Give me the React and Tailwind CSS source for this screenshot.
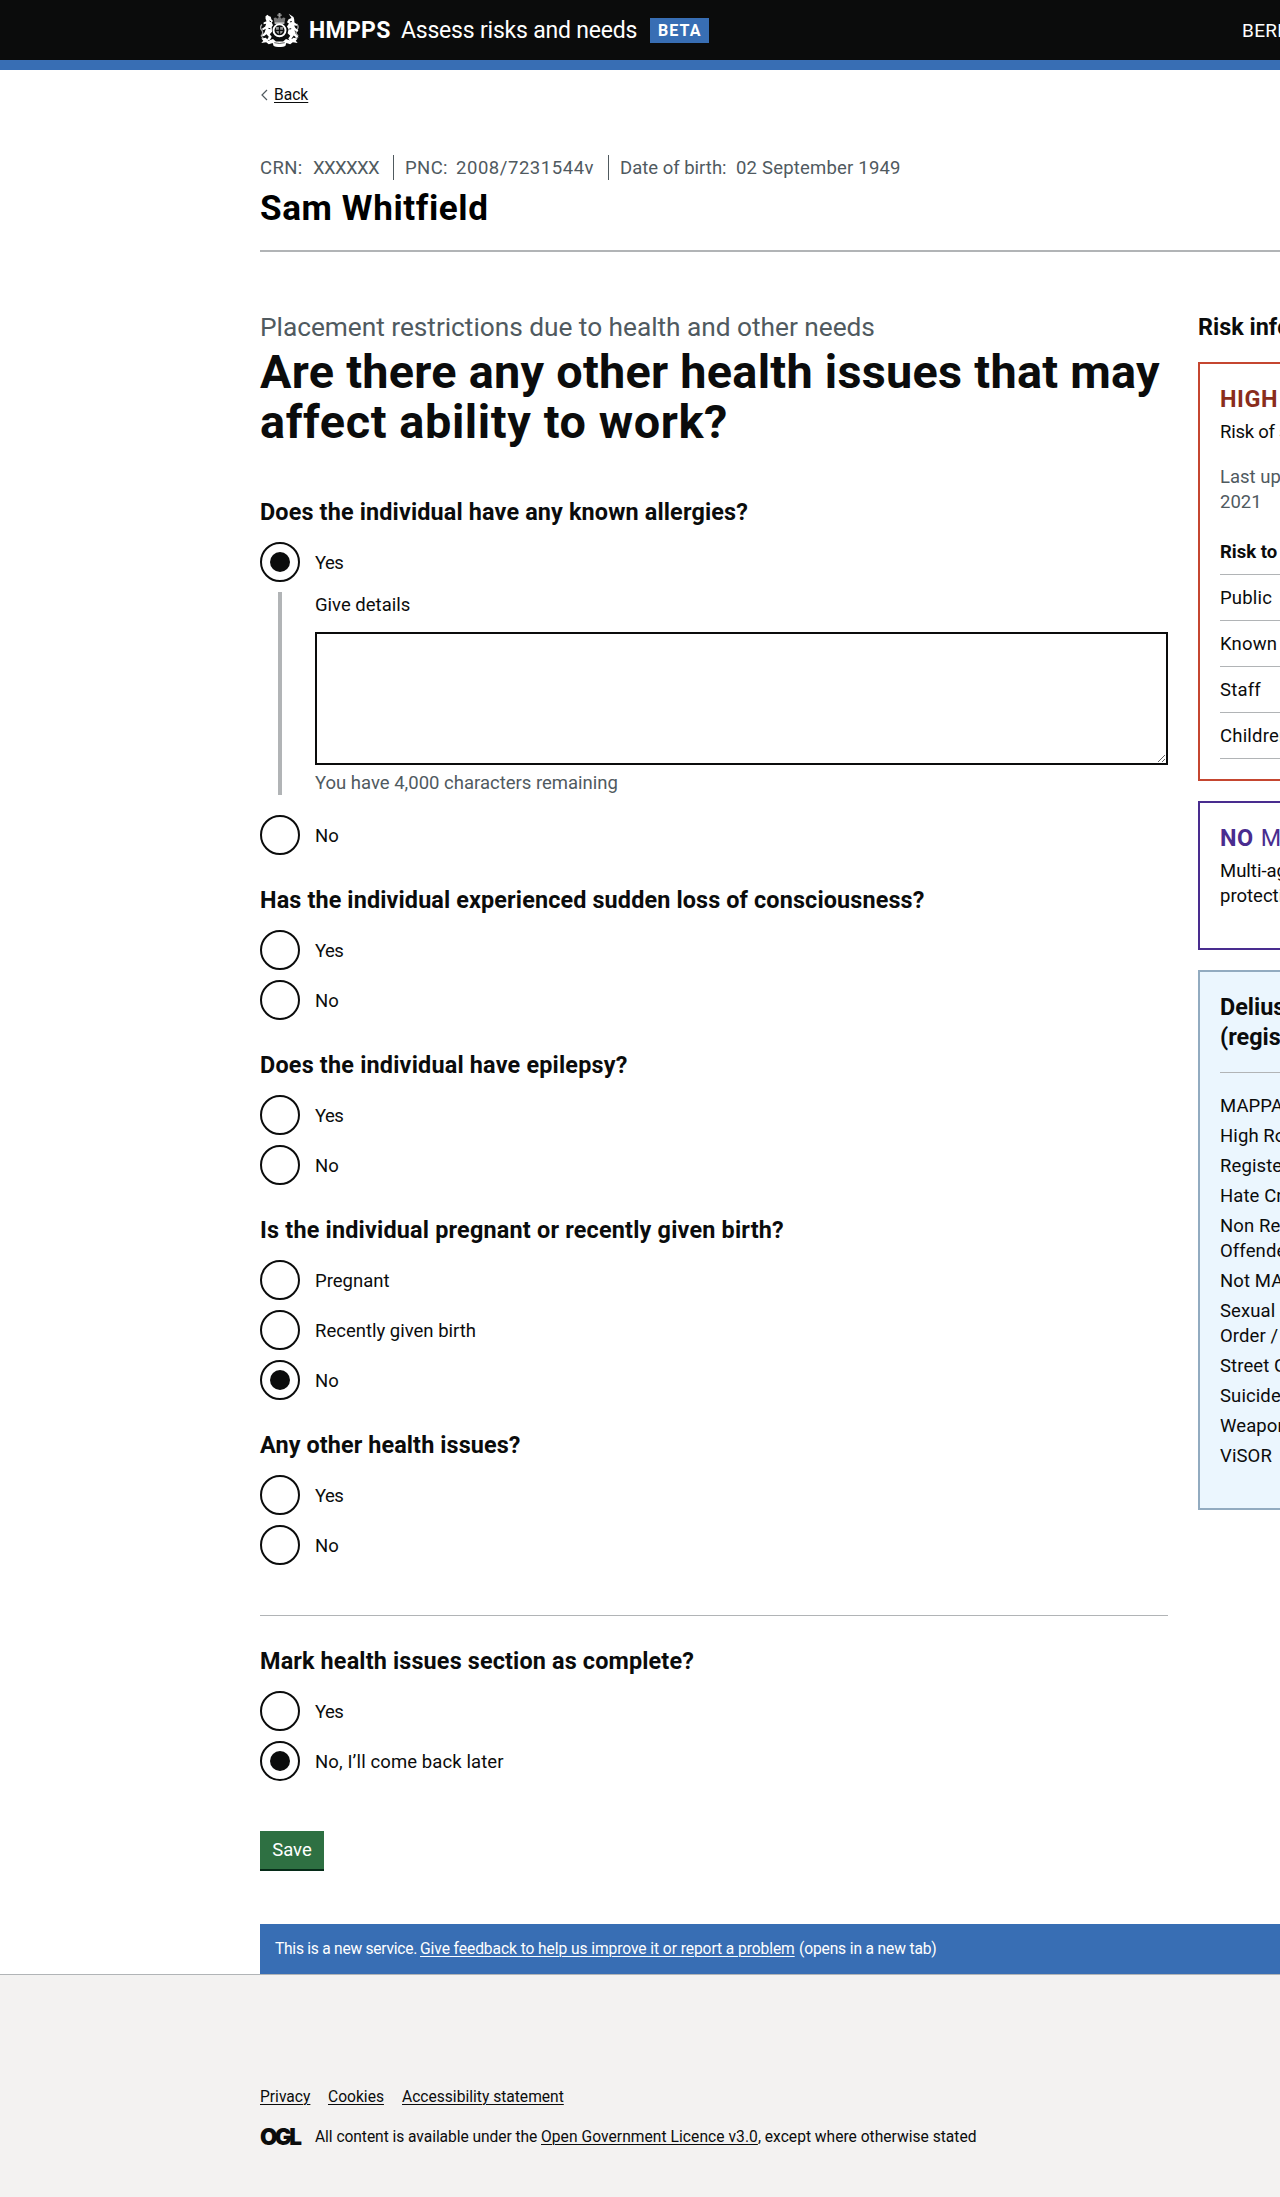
function Crest() {
  return (
    <svg viewBox="0 0 120 104" className="h-[34px] w-[39px] shrink-0" fill="#fff" stroke="none" aria-hidden="true">
      {/* crown */}
      <path d="M57 0h6v4h4v4h-4v5h-6V8h-4V4h4z" opacity=".6" />
      <path d="M42 16q6-6 11 1l5-4h4l5 4q5-7 11-1l-3 15H45z" opacity=".45" />
      <path d="M45 29h30v4H45z" opacity=".8" />
      {/* garter and shield */}
      <circle cx="60" cy="53" r="18.5" fill="none" stroke="#fff" strokeWidth="6" />
      <path d="M49 43h9v8h-9zM62 43h9v8h-9zM50 55h8v9q-7-2-8-9zM62 55h8q0 7-8 9z" opacity=".55" />
      {/* lion */}
      <path d="M17 10l6-5 4 4 6 2 2 8 5 5-4 5 4 8-4 6 1 14-7 8 6 8-5 9-11 2 7-11-7-8-8 6-7-2 9-9 4-12-9 5-3-5 10-7 3-8-8 1v-5l9-4-3-8z" />
      <path d="M6 35q-8 9-1 17t-1 18l6 8" fill="none" stroke="#fff" strokeWidth="4" opacity=".65" />
      {/* unicorn */}
      <path d="M103 12L88 2l9 13-9 4-5 9 6 4-6 9 5 9-3 12 8 8-6 8 6 10 11 1-7-11 7-9 8 7 7-2-9-10-4-11 9 5 3-5-9-7-4-8 9 1v-5l-8-5-1-11z" />
      <path d="M113 33q8 9 1 18t2 18l-7 9" fill="none" stroke="#fff" strokeWidth="4" opacity=".65" />
      <path d="M29 24l5 3M26 47l6 1M92 27l6-1M90 49l6-1" stroke="#0b0c0c" strokeWidth="3" />
      {/* motto scroll */}
      <path d="M4 78l14-2 8 9 14-5 9 7h22l9-7 14 5 8-9 14 2-6 7 6 7-15-2-8 6-12-4-3 9q-18 7-36 0l-3-9-12 4-8-6-15 2 6-7z" />
      <path d="M44 91q16 5 32 0" fill="none" stroke="#0b0c0c" strokeWidth="2" />
    </svg>
  );
}

function Radio({ label, checked, tracking = "" }) {
  return (
    <label className="flex h-10 items-center">
      <span className="flex size-10 shrink-0 items-center justify-center rounded-full border-2 border-[#0b0c0c]">
        {checked && <span className="size-5 rounded-full bg-[#0b0c0c]" />}
      </span>
      <span className={`ml-[15px] pt-[3px] text-[18.5px] leading-[25px] ${tracking}`}>{label}</span>
    </label>
  );
}

function Question({ title, tracking, children, className = "mt-[30px]" }) {
  return (
    <fieldset className={className}>
      <legend className={`mb-[15px] text-[23.4px] leading-[30px] font-bold ${tracking}`}>{title}</legend>
      <div className="flex flex-col gap-2.5">{children}</div>
    </fieldset>
  );
}

const YES = "tracking-[-0.6px]";

const flags = [
  ["MAPPA"],
  ["High RoSH"],
  ["Registered Sex Offender"],
  ["Hate Crime"],
  ["Non Registered Sex", "Offender"],
  ["Not MAPPA Eligible"],
  ["Sexual Harm Prevention", "Order / Sex Offences"],
  ["Street Gangs"],
  ["Suicide / Self Harm"],
  ["Weapons"],
  ["ViSOR"],
];

const risks = [
  ["Public", "HIGH"],
  ["Known Adult", "MEDIUM"],
  ["Staff", "HIGH"],
  ["Children", "LOW"],
];

function Sidebar() {
  return (
    <aside className="w-[342px] shrink-0 text-[18.5px] leading-[25px] whitespace-nowrap">
      <h2 className="pt-px text-[23.4px] leading-[30px] font-bold">Risk information</h2>
      <section className="mt-5 h-[419px] border-2 border-[#c54630] p-5">
        <h3 className="text-[23.4px] leading-[30px] font-bold tracking-[0.6px] text-[#8a2d1c]">HIGH RoSH</h3>
        <p className="mt-1.5 tracking-[-0.25px]">Risk of serious harm</p>
        <p className="mt-5 text-[#505a5f]">
          Last updated: 11 October
          <br />
          2021
        </p>
        <div className="mt-[25px] flex justify-between border-b border-[#b1b4b6] pb-[9px] font-bold">
          <span>Risk to</span>
          <span>Community</span>
        </div>
        {risks.map(([who, level]) => (
          <div key={who} className="flex justify-between border-b border-[#b1b4b6] pt-[11px] pb-[9px]">
            <span className="tracking-[0.2px]">{who}</span>
            <span>{level}</span>
          </div>
        ))}
      </section>
      <section className="mt-5 h-[149px] border-2 border-[#492d8f] p-5">
        <h3 className="text-[23.4px] leading-[30px] text-[#492d8f]">
          <b className="tracking-[0.6px]">NO</b> <span className="ml-px">MAPPA</span>
        </h3>
        <p className="mt-1.5">
          Multi-agency public
          <br />
          protection arrangements
        </p>
      </section>
      <section className="mt-5 h-[540px] border-2 border-[#92abc0] bg-[#ebf6fe] p-5">
        <h3 className="border-b border-[#b1b4b6] pb-5 text-[23.4px] leading-[30px] font-bold">
          Delius risk flags
          <br />
          (registers)
        </h3>
        <ul className="mt-[21px] flex flex-col gap-[5px] tracking-[0.1px]">
          {flags.map((lines) => (
            <li key={lines[0]}>
              {lines.map((line) => (
                <span key={line} className="block">
                  {line}
                </span>
              ))}
            </li>
          ))}
        </ul>
      </section>
    </aside>
  );
}

export default function App() {
  return (
    <div className="h-[2197px] w-full overflow-hidden bg-white font-[Roboto,sans-serif] text-[#0b0c0c]">
      <header className="h-[70px] border-b-10 border-[#386eb4] bg-[#0b0c0c] text-white">
        <div className="ml-[260px] flex h-[60px] w-[1280px] items-center whitespace-nowrap">
          <Crest />
          <span className="ml-2.5 w-[92px] pt-px text-[23px] leading-[30px] font-bold tracking-[0.3px]">HMPPS</span>
          <span className="w-[249px] pt-px text-[23px] leading-[30px] tracking-[-0.21px]">Assess risks and needs</span>
          <span className="h-[25px] w-[59px] bg-[#386eb4] pl-2 text-[16px] leading-[25px] font-bold tracking-[1.1px]">
            BETA
          </span>
          <span className="ml-[533px] text-[19px] leading-[25px] tracking-[0.3px]">BERNARD BEAKS</span>
        </div>
      </header>

      <div className="ml-[260px] w-[1280px]">
        <a className="mt-[15px] flex h-5 w-[50px] items-center text-[15.6px] leading-5">
          <svg viewBox="0 0 8 12" className="mr-[6px] h-3 w-2" fill="none" stroke="#505a5f" strokeWidth="1.2">
            <path d="M7 1L2 6l5 5" />
          </svg>
          <span className="underline underline-offset-2 decoration-1">Back</span>
        </a>

        <div className="mt-[50px] flex h-[25px] text-[18.5px] leading-[27px] whitespace-pre text-[#505a5f]">
          <span className="w-[53px] tracking-[0.4px]">CRN:</span>
          <span className="w-20 tracking-[-0.6px]">XXXXXX</span>
          <span className="w-[63px] border-l border-[#505a5f] pl-[11px] tracking-[0.4px]">PNC:</span>
          <span className="w-[152px] tracking-[0.55px]">2008/7231544v</span>
          <span className="w-[128px] border-l border-[#505a5f] pl-[11px]">Date of birth:</span>
          <span className="tracking-[0.2px]">02 September 1949</span>
        </div>
        <h2 className="mt-2 text-[35.1px] leading-10 font-bold tracking-[0.6px] text-black">Sam Whitfield</h2>
        <hr className="mt-[22px] border-t-2 border-[#b1b4b6]" />

        <div className="mt-[59px] flex justify-between">
          <main className="w-[908px]">
            <p className="pt-px text-[26.3px] leading-[30px] tracking-[-0.04px] text-[#505a5f]">
              Placement restrictions due to health and other needs
            </p>
            <h1 className="mt-[5px] text-[46.8px] leading-[50px] font-bold whitespace-nowrap">
              <span className="block tracking-[0.27px]">Are there any other health issues that may</span>
              <span className="block tracking-[0.6px]">affect ability to work?</span>
            </h1>

            <Question title="Does the individual have any known allergies?" tracking="tracking-[0.15px]" className="mt-[50px]">
              <Radio label="Yes" checked tracking={YES} />
              <div className="mb-2.5 ml-[18px] h-[203px] border-l-4 border-[#b1b4b6] pl-[33px] text-[18.5px] leading-[25px]">
                <p className="pt-px pb-3.5">Give details</p>
                <textarea className="block h-[133px] w-[853px] resize-y border-2 border-[#0b0c0c] bg-white" />
                <p className="mt-1.5 text-[#505a5f]">You have 4,000 characters remaining</p>
              </div>
              <Radio label="No" />
            </Question>

            <Question title="Has the individual experienced sudden loss of consciousness?" tracking="tracking-[0.13px]">
              <Radio label="Yes" tracking={YES} />
              <Radio label="No" />
            </Question>

            <Question title="Does the individual have epilepsy?" tracking="tracking-[0.2px]">
              <Radio label="Yes" tracking={YES} />
              <Radio label="No" />
            </Question>

            <Question title="Is the individual pregnant or recently given birth?" tracking="tracking-[0.2px]">
              <Radio label="Pregnant" />
              <Radio label="Recently given birth" />
              <Radio label="No" checked />
            </Question>

            <Question title="Any other health issues?" tracking="tracking-[0.1px]">
              <Radio label="Yes" tracking={YES} />
              <Radio label="No" />
            </Question>

            <hr className="mt-[50px] border-t border-[#b1b4b6]" />

            <Question title="Mark health issues section as complete?" tracking="tracking-[0.15px]">
              <Radio label="Yes" tracking={YES} />
              <Radio label="No, I’ll come back later" checked tracking="tracking-[0.1px]" />
            </Question>

            <button className="mt-[50px] block h-10 w-16 border-b-2 border-[#062b18] bg-[#2e7042] pt-px text-[18.5px] leading-[37px] text-white">
              Save
            </button>
          </main>
          <Sidebar />
        </div>

        <div className="mt-[53px] h-[50px] bg-[#386eb4] pl-[15px] text-[15.6px] leading-[50px] whitespace-nowrap text-white">
          <span className="inline-block w-[145px] tracking-[-0.26px]">This is a new service.</span>
          <a className="inline-block w-[379px] tracking-[-0.08px]">
            <span className="underline underline-offset-2 decoration-1">
              Give feedback to help us improve it or report a problem
            </span>
          </a>
          <span className="tracking-[-0.15px]">(opens in a new tab)</span>
        </div>
      </div>

      <footer className="h-[223px] border-t border-[#b1b4b6] bg-[#f3f2f1] pl-[260px] text-[15.6px] leading-5 whitespace-nowrap">
        <div className="flex pt-[112px]">
          <a className="w-[68px] underline underline-offset-2 decoration-1">Privacy</a>
          <a className="w-[74px] underline underline-offset-2 decoration-1">Cookies</a>
          <a className="underline underline-offset-2 decoration-1">Accessibility statement</a>
        </div>
        <div className="mt-5 flex">
          <span className="w-[55px] font-[Inter,sans-serif] text-[22.5px] leading-[19px] font-black tracking-[-2.6px]">OGL</span>
          <span className="w-[226px] tracking-[-0.06px]">All content is available under the</span>
          <a className="tracking-[0.05px] underline underline-offset-2 decoration-1">Open Government Licence v3.0</a>
          <span>, except where otherwise stated</span>
        </div>
      </footer>
    </div>
  );
}
